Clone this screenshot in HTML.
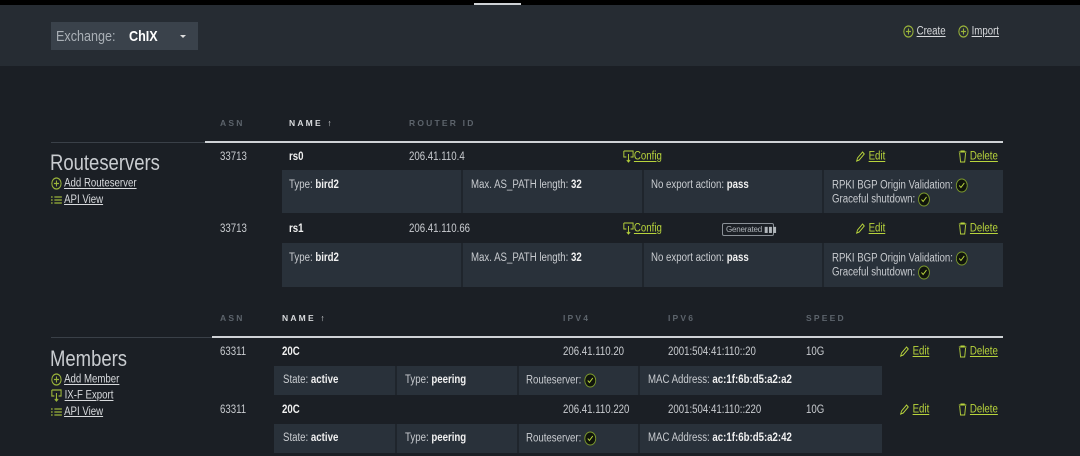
<!DOCTYPE html>
<html><head><style>
*{margin:0;padding:0;box-sizing:border-box}
body{width:1080px;height:456px;background:#1b1f25;font-family:"Liberation Sans",sans-serif;color:#c9ccd0;font-size:11.5px;position:relative;overflow:hidden}
.a{position:absolute;white-space:nowrap}
.a:not(.x):not(.th){transform:scaleX(.84);transform-origin:0 0}
.top{left:0;top:0;width:1080px;height:5px;background:#000}
.hdr{left:0;top:5px;width:1080px;height:61px;background:#262c33}
.sel{left:51px;top:22px;width:147px;height:28px;background:#3a424b}
.th{font-family:"Liberation Sans",sans-serif;font-size:8.5px;letter-spacing:2.2px;font-weight:bold;color:#5d646c}
.th.b{color:#d8dadd}
b{color:#f0f0f0;font-weight:600}
.g{color:#b8d43c;text-decoration:underline}
.w{color:#d8dadd;text-decoration:underline}
.det{background:#29313a}
.sep{background:#1f252c;width:2px}
svg{vertical-align:middle}
.h2{font-size:22px;color:#c9ccd0}
</style></head><body>
<div class="a x top"></div>
<div class="a x" style="left:474px;top:3px;width:47px;height:2px;background:#cfd2d6"></div>
<div class="a x hdr"></div>
<div class="a x sel"></div>
<div class="a" style="left:56px;top:28px;font-size:15px;color:#aab0b6">Exchange:</div>
<div class="a" style="left:129px;top:28px;font-size:15px;color:#fff;font-weight:bold">ChIX</div>
<div class="a x" style="left:180px;top:35px;width:0;height:0;border-left:3px solid transparent;border-right:3px solid transparent;border-top:3px solid #ddd"></div>
<div class="a" style="left:903px;top:25px"><svg width="13" height="13"><circle cx="6.5" cy="6.5" r="5.5" fill="none" stroke="#9bb53a" stroke-width="1.2"/><path d="M6.5 3.5v6M3.5 6.5h6" stroke="#9bb53a" stroke-width="1.2"/></svg> <span class="w">Create</span></div>
<div class="a" style="left:958px;top:25px"><svg width="13" height="13"><circle cx="6.5" cy="6.5" r="5.5" fill="none" stroke="#9bb53a" stroke-width="1.2"/><path d="M6.5 3.5v6M3.5 6.5h6" stroke="#9bb53a" stroke-width="1.2"/></svg> <span class="w">Import</span></div>

<!-- Routeservers -->
<div class="a th" style="left:220px;top:118px">ASN</div>
<div class="a th b" style="left:289px;top:118px">NAME ↑</div>
<div class="a th" style="left:409px;top:118px">ROUTER ID</div>
<div class="a x" style="left:51px;top:142px;width:154px;height:1px;background:#3a4048"></div>
<div class="a x" style="left:205px;top:141px;width:798px;height:2px;background:#cfd2d6"></div>
<div class="a h2" style="left:50px;top:150px">Routeservers</div>
<div class="a" style="left:51px;top:177px"><svg width="13" height="13"><circle cx="6.5" cy="6.5" r="5.5" fill="none" stroke="#9bb53a" stroke-width="1.2"/><path d="M6.5 3.5v6M3.5 6.5h6" stroke="#9bb53a" stroke-width="1.2"/></svg> <span class="w">Add Routeserver</span></div>
<div class="a" style="left:51px;top:194px"><svg width="13" height="10"><path d="M0 2h2M0 5h2M0 8h2M4 2h9M4 5h9M4 8h9" stroke="#9bb53a" stroke-width="1.3"/></svg> <span class="w">API View</span></div>

<div class="a" style="left:220px;top:151px">33713</div>
<div class="a" style="left:289px;top:151px"><b>rs0</b></div>
<div class="a" style="left:409px;top:151px">206.41.110.4</div>
<div class="a" style="left:623px;top:150px"><svg width="13" height="13"><path d="M1 1h11v6H9M4 7H1V1M6.5 4v8M4.5 10l2 2 2-2" fill="none" stroke="#b8d43c" stroke-width="1.1"/></svg><span class="g">Config</span></div>
<div class="a" style="left:855px;top:150px"><svg width="13" height="13"><path d="M2 11l1-3 6-6 2 2-6 6z" fill="none" stroke="#b8d43c" stroke-width="1.1"/></svg> <span class="g">Edit</span></div>
<div class="a" style="left:958px;top:150px"><svg width="11" height="13"><path d="M1 2h9M3.5 2V1h4v1M2 3l1 9h5l1-9" fill="none" stroke="#b8d43c" stroke-width="1.1"/></svg> <span class="g">Delete</span></div>
<div class="a x det" style="left:282px;top:170px;width:721px;height:43px"></div>
<div class="a x sep" style="left:461px;top:170px;height:43px"></div>
<div class="a x sep" style="left:642px;top:170px;height:43px"></div>
<div class="a x sep" style="left:822px;top:170px;height:43px"></div>
<div class="a" style="left:289px;top:179px">Type: <b>bird2</b></div>
<div class="a" style="left:471px;top:179px">Max. AS_PATH length: <b>32</b></div>
<div class="a" style="left:651px;top:179px">No export action: <b>pass</b></div>
<div class="a" style="left:832px;top:178px">RPKI BGP Origin Validation: <svg width="15" height="15"><circle cx="7.5" cy="7.5" r="6.5" fill="#10140c" stroke="#7c9a2c"/><path d="M4.5 7.5l2 2 4-4.5" fill="none" stroke="#b8d43c" stroke-width="1.1"/></svg></div>
<div class="a" style="left:832px;top:192px">Graceful shutdown: <svg width="15" height="15"><circle cx="7.5" cy="7.5" r="6.5" fill="#10140c" stroke="#7c9a2c"/><path d="M4.5 7.5l2 2 4-4.5" fill="none" stroke="#b8d43c" stroke-width="1.1"/></svg></div>

<div class="a" style="left:220px;top:223px">33713</div>
<div class="a" style="left:289px;top:223px"><b>rs1</b></div>
<div class="a" style="left:409px;top:223px">206.41.110.66</div>
<div class="a" style="left:623px;top:222px"><svg width="13" height="13"><path d="M1 1h11v6H9M4 7H1V1M6.5 4v8M4.5 10l2 2 2-2" fill="none" stroke="#b8d43c" stroke-width="1.1"/></svg><span class="g">Config</span></div>
<div class="a x" style="left:722px;top:223px;width:52px;height:13px;border:1px solid #8a9097;border-radius:2px;font-size:8px;color:#b0b5ba;padding-left:3px;line-height:11px;font-family:'Liberation Sans',sans-serif;letter-spacing:-.2px">Generated ▮▮▮</div>
<div class="a" style="left:855px;top:222px"><svg width="13" height="13"><path d="M2 11l1-3 6-6 2 2-6 6z" fill="none" stroke="#b8d43c" stroke-width="1.1"/></svg> <span class="g">Edit</span></div>
<div class="a" style="left:958px;top:222px"><svg width="11" height="13"><path d="M1 2h9M3.5 2V1h4v1M2 3l1 9h5l1-9" fill="none" stroke="#b8d43c" stroke-width="1.1"/></svg> <span class="g">Delete</span></div>
<div class="a x det" style="left:282px;top:243px;width:721px;height:44px"></div>
<div class="a x sep" style="left:461px;top:243px;height:44px"></div>
<div class="a x sep" style="left:642px;top:243px;height:44px"></div>
<div class="a x sep" style="left:822px;top:243px;height:44px"></div>
<div class="a" style="left:289px;top:252px">Type: <b>bird2</b></div>
<div class="a" style="left:471px;top:252px">Max. AS_PATH length: <b>32</b></div>
<div class="a" style="left:651px;top:252px">No export action: <b>pass</b></div>
<div class="a" style="left:832px;top:251px">RPKI BGP Origin Validation: <svg width="15" height="15"><circle cx="7.5" cy="7.5" r="6.5" fill="#10140c" stroke="#7c9a2c"/><path d="M4.5 7.5l2 2 4-4.5" fill="none" stroke="#b8d43c" stroke-width="1.1"/></svg></div>
<div class="a" style="left:832px;top:265px">Graceful shutdown: <svg width="15" height="15"><circle cx="7.5" cy="7.5" r="6.5" fill="#10140c" stroke="#7c9a2c"/><path d="M4.5 7.5l2 2 4-4.5" fill="none" stroke="#b8d43c" stroke-width="1.1"/></svg></div>

<!-- Members -->
<div class="a th" style="left:220px;top:313px">ASN</div>
<div class="a th b" style="left:282px;top:313px">NAME ↑</div>
<div class="a th" style="left:563px;top:313px">IPV4</div>
<div class="a th" style="left:668px;top:313px">IPV6</div>
<div class="a th" style="left:806px;top:313px">SPEED</div>
<div class="a x" style="left:51px;top:337px;width:161px;height:1px;background:#3a4048"></div>
<div class="a x" style="left:212px;top:336px;width:791px;height:2px;background:#cfd2d6"></div>
<div class="a h2" style="left:50px;top:346px">Members</div>
<div class="a" style="left:51px;top:373px"><svg width="13" height="13"><circle cx="6.5" cy="6.5" r="5.5" fill="none" stroke="#9bb53a" stroke-width="1.2"/><path d="M6.5 3.5v6M3.5 6.5h6" stroke="#9bb53a" stroke-width="1.2"/></svg> <span class="w">Add Member</span></div>
<div class="a" style="left:51px;top:389px"><svg width="13" height="13"><path d="M1 1h11v6H9M4 7H1V1M6.5 4v8M4.5 10l2 2 2-2" fill="none" stroke="#9bb53a" stroke-width="1.3"/></svg> <span class="w">IX-F Export</span></div>
<div class="a" style="left:51px;top:406px"><svg width="13" height="10"><path d="M0 2h2M0 5h2M0 8h2M4 2h9M4 5h9M4 8h9" stroke="#9bb53a" stroke-width="1.3"/></svg> <span class="w">API View</span></div>

<div class="a" style="left:220px;top:346px">63311</div>
<div class="a" style="left:282px;top:346px"><b>20C</b></div>
<div class="a" style="left:563px;top:346px">206.41.110.20</div>
<div class="a" style="left:668px;top:346px">2001:504:41:110::20</div>
<div class="a" style="left:806px;top:346px">10G</div>
<div class="a" style="left:899px;top:345px"><svg width="13" height="13"><path d="M2 11l1-3 6-6 2 2-6 6z" fill="none" stroke="#b8d43c" stroke-width="1.1"/></svg> <span class="g">Edit</span></div>
<div class="a" style="left:958px;top:345px"><svg width="11" height="13"><path d="M1 2h9M3.5 2V1h4v1M2 3l1 9h5l1-9" fill="none" stroke="#b8d43c" stroke-width="1.1"/></svg> <span class="g">Delete</span></div>
<div class="a x det" style="left:274px;top:366px;width:608px;height:29px"></div>
<div class="a x sep" style="left:395px;top:366px;height:29px"></div>
<div class="a x sep" style="left:517px;top:366px;height:29px"></div>
<div class="a x sep" style="left:638px;top:366px;height:29px"></div>
<div class="a" style="left:283px;top:374px">State: <b>active</b></div>
<div class="a" style="left:405px;top:374px">Type: <b>peering</b></div>
<div class="a" style="left:526px;top:373px">Routeserver: <svg width="15" height="15"><circle cx="7.5" cy="7.5" r="6.5" fill="#10140c" stroke="#7c9a2c"/><path d="M4.5 7.5l2 2 4-4.5" fill="none" stroke="#b8d43c" stroke-width="1.1"/></svg></div>
<div class="a" style="left:648px;top:374px">MAC Address: <b>ac:1f:6b:d5:a2:a2</b></div>

<div class="a" style="left:220px;top:404px">63311</div>
<div class="a" style="left:282px;top:404px"><b>20C</b></div>
<div class="a" style="left:563px;top:404px">206.41.110.220</div>
<div class="a" style="left:668px;top:404px">2001:504:41:110::220</div>
<div class="a" style="left:806px;top:404px">10G</div>
<div class="a" style="left:899px;top:403px"><svg width="13" height="13"><path d="M2 11l1-3 6-6 2 2-6 6z" fill="none" stroke="#b8d43c" stroke-width="1.1"/></svg> <span class="g">Edit</span></div>
<div class="a" style="left:958px;top:403px"><svg width="11" height="13"><path d="M1 2h9M3.5 2V1h4v1M2 3l1 9h5l1-9" fill="none" stroke="#b8d43c" stroke-width="1.1"/></svg> <span class="g">Delete</span></div>
<div class="a x det" style="left:274px;top:424px;width:608px;height:29px"></div>
<div class="a x sep" style="left:395px;top:424px;height:29px"></div>
<div class="a x sep" style="left:517px;top:424px;height:29px"></div>
<div class="a x sep" style="left:638px;top:424px;height:29px"></div>
<div class="a" style="left:283px;top:432px">State: <b>active</b></div>
<div class="a" style="left:405px;top:432px">Type: <b>peering</b></div>
<div class="a" style="left:526px;top:431px">Routeserver: <svg width="15" height="15"><circle cx="7.5" cy="7.5" r="6.5" fill="#10140c" stroke="#7c9a2c"/><path d="M4.5 7.5l2 2 4-4.5" fill="none" stroke="#b8d43c" stroke-width="1.1"/></svg></div>
<div class="a" style="left:648px;top:432px">MAC Address: <b>ac:1f:6b:d5:a2:42</b></div>
</body></html>
